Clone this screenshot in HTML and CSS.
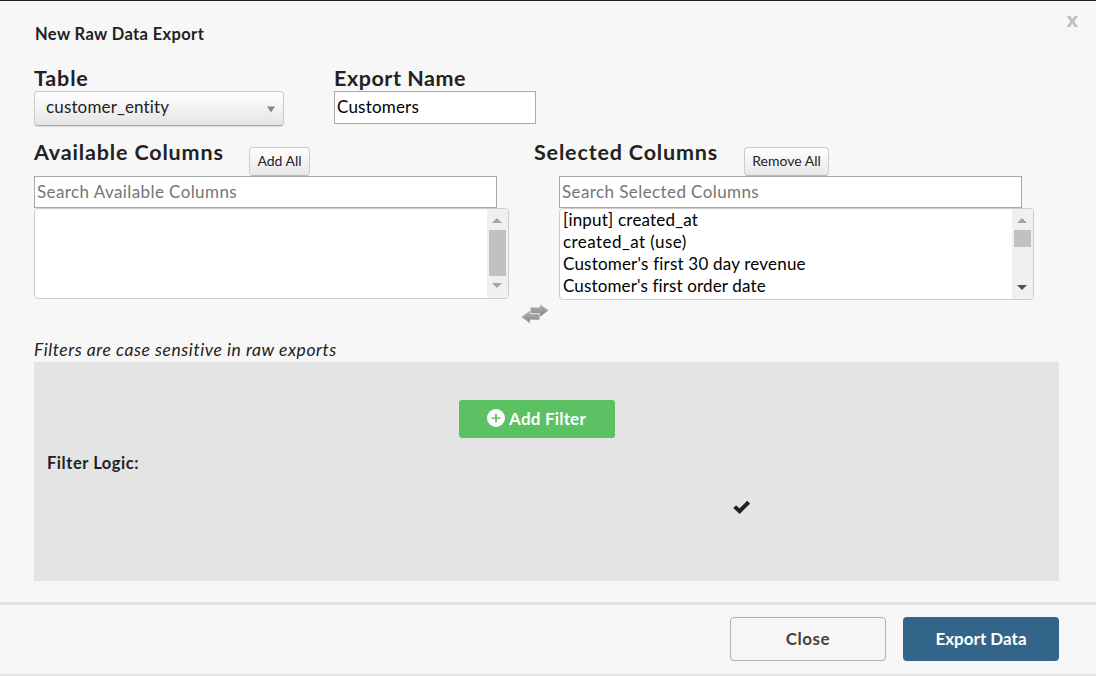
FILE: index.html
```html
<!DOCTYPE html>
<html lang="en">
<head>
<meta charset="utf-8">
<title>New Raw Data Export</title>
<link rel="stylesheet" href="styles.css">
</head>
<body>
<div class="modal">
  <header class="modal-header">
    <h1 class="title"><span>New Raw Data Export</span></h1>
    <span class="close-x">x</span>
  </header>
  <main class="modal-body">
    <div class="fields">
      <div class="field">
        <div class="heading"><span>Table</span></div>
        <div class="select"><span>customer_entity</span>
          <svg class="caret" width="8" height="7" viewBox="0 0 8 7"><path d="M0 0.5H8L4 6.5Z" fill="#888"/></svg>
        </div>
      </div>
      <div class="field">
        <div class="heading"><span class="export-label">Export Name</span></div>
        <div class="input name-input"><span>Customers</span></div>
      </div>
    </div>
    <div class="columns">
      <section class="available">
        <div class="column-head">
          <div class="heading"><span>Available Columns</span></div>
          <div class="small-btn add-all"><span>Add All</span></div>
        </div>
        <div class="input search"><span>Search Available Columns</span></div>
        <div class="list list-left">
          <div class="options"></div>
          <div class="scrollbar">
            <svg width="10" height="5" viewBox="0 0 10 5"><path d="M0 5L5 0L10 5Z" fill="#a3a3a3"/></svg>
            <div class="thumb thumb-tall"></div>
            <svg class="down" width="10" height="5" viewBox="0 0 10 5"><path d="M0 0L5 5L10 0Z" fill="#a3a3a3"/></svg>
          </div>
        </div>
      </section>
      <div class="swap">
        <svg width="28" height="20" viewBox="0 0 28 20">
          <defs>
            <linearGradient id="arrow" x1="0" y1="0" x2="0" y2="1"><stop offset="0" stop-color="#b4b4b4"/><stop offset="1" stop-color="#858585"/></linearGradient>
          </defs>
          <path d="M9.500 3.500H19V0.300L27.500 6.500L19 12.700V9.300H9.500Z" fill="url(#arrow)"/>
          <path d="M18.500 10H9V6.700L.5 12.900L9 19.200V15.800H18.500Z" fill="url(#arrow)" stroke="#d4d4d4" stroke-width=".4"/>
        </svg>
      </div>
      <section class="selected">
        <div class="column-head head-right">
          <div class="heading"><span>Selected Columns</span></div>
          <div class="small-btn remove-all"><span>Remove All</span></div>
        </div>
        <div class="input search"><span>Search Selected Columns</span></div>
        <div class="list list-right">
          <div class="options">
            <div class="option"><span>[input] created_at</span></div>
            <div class="option"><span class="wide">created_at (use)</span></div>
            <div class="option"><span>Customer's first 30 day revenue</span></div>
            <div class="option"><span class="tight">Customer's first order date</span></div>
          </div>
          <div class="scrollbar">
            <svg width="10" height="5" viewBox="0 0 10 5"><path d="M0 5L5 0L10 5Z" fill="#a3a3a3"/></svg>
            <div class="thumb thumb-short"></div>
            <svg class="down" width="10" height="5" viewBox="0 0 10 5"><path d="M0 0L5 5L10 0Z" fill="#505050"/></svg>
          </div>
        </div>
      </section>
    </div>
    <div class="note"><span>Filters are case sensitive in raw exports</span></div>
    <div class="filters">
      <div class="add-filter">
        <svg width="18" height="18" viewBox="0 0 18 18"><circle cx="9" cy="9" r="9" fill="#fff"/><path d="M9 4.500V13.500M4.500 9H13.500" stroke="#5bc163" stroke-width="1.700"/></svg>
        <span>Add Filter</span>
      </div>
      <div class="logic"><span>Filter Logic:</span></div>
      <svg class="check" width="17" height="14" viewBox="0 0 17 14"><path d="M1.700 6.600L6.600 11.200L15.600 2.200" fill="none" stroke="#222" stroke-width="4"/></svg>
    </div>
  </main>
  <footer class="modal-footer">
    <div class="btn btn-close"><span>Close</span></div>
    <div class="btn btn-export"><span>Export Data</span></div>
  </footer>
</div>
</body>
</html>
```
FILE: styles.css
```css
* { box-sizing: border-box; }
body { margin: 0; font-family: Lato, "Open Sans", sans-serif; font-size: 17px; font-variant-ligatures: none; color: #222; background: #f7f7f7; }
span { white-space: nowrap; }
svg { display: block; flex: none; }
.modal { height: 676px; display: flex; flex-direction: column; border-top: 1px solid #222; border-bottom: 2px solid #e4e4e4; background: #f7f7f7; }
.modal-header { height: 67px; padding: 23px 18px 0 35px; display: flex; justify-content: space-between; }
.title { margin: 0; font-size: 16.5px; line-height: 21px; font-weight: 700; letter-spacing: .37px; }
.close-x { font: 700 20px/20px "Open Sans", sans-serif; color: #c0c0c0; margin-top: -14px; }
.modal-body { height: 534px; padding: 0 37px 0 34px; }
.fields { display: flex; gap: 50px; height: 75px; }
.heading { font-size: 21.5px; line-height: 21px; height: 23px; font-weight: 700; letter-spacing: .84px; }
.export-label { letter-spacing: .55px; }
.select { width: 250px; height: 35px; padding: 0 8px 4px 11px; display: flex; align-items: center; justify-content: space-between; border: 1px solid #ccc; border-bottom-color: #aaa; border-radius: 4px; background: linear-gradient(#fff, #e5e5e5); box-shadow: 0 1px 1px rgba(0,0,0,.12); letter-spacing: .15px; }
.caret { margin-top: 5px; }
.input { display: flex; align-items: center; border: 1px solid #a9a9a9; background: #fff; padding: 0 2px; }
.name-input { width: 202px; height: 33px; padding-bottom: 2px; color: #000; letter-spacing: .2px; }
.columns { display: flex; height: 195px; }
.available { width: 475px; }
.swap { width: 50px; padding: 161px 0 0 12px; }
.selected { width: 475px; }
.column-head { display: flex; height: 33px; justify-content: space-between; padding-right: 199px; }
.head-right { margin-left: -25px; padding-right: 205px; }
.column-head .heading { line-height: 18px; }
.small-btn { height: 29px; margin-top: 4px; padding-bottom: 2px; display: flex; align-items: center; justify-content: center; font-size: 14px; border: 1px solid #ccc; border-bottom-color: #b8b8b8; border-radius: 4px; background: linear-gradient(#fff, #e8e8e8); }
.add-all { width: 61px; }
.remove-all { width: 85px; }
.search { width: 463px; height: 32px; padding-bottom: 2px; color: #757575; letter-spacing: .41px; }
.list { display: flex; border: 1px solid #ccc; border-radius: 4px; background: #fff; overflow: hidden; color: #000; }
.list-left { height: 91px; }
.list-right { height: 92px; }
.options { flex: 1; padding: 0 3px; letter-spacing: .2px; }
.wide { letter-spacing: .45px; }
.tight { letter-spacing: .14px; }
.option { height: 22px; line-height: 22px; }
.scrollbar { width: 21px; padding: 9px 0 9px; background: #f0f0f0; display: flex; flex-direction: column; align-items: center; }
.scrollbar svg { margin-right: 1px; }
.thumb { width: 17px; margin-top: 7px; background: #c1c1c1; }
.list-left .down { margin-bottom: 1px; }
.thumb-tall { height: 46px; }
.thumb-short { height: 17px; }
.down { margin-top: auto; }
.note { height: 24px; line-height: 23px; font-size: 17.5px; font-style: italic; letter-spacing: .54px; }
.filters { height: 219px; background: #e4e4e4; padding: 38px 13px 0; }
.add-filter { width: 156px; height: 38px; margin-left: 412px; padding: 0 1px 2px 0; display: flex; align-items: center; justify-content: center; gap: 4px; border-radius: 3px; background: #5bc163; color: #fff; font-weight: 700; letter-spacing: .2px; }
.logic { margin-top: 14px; height: 22px; line-height: 22px; font-weight: 700; font-size: 16.5px; letter-spacing: .55px; }
.check { margin: 26px 0 0 686px; }
.modal-footer { height: 72px; border-top: 3px solid #e4e4e4; padding: 12px 37px 0; display: flex; justify-content: flex-end; gap: 17px; }
.btn { width: 156px; height: 44px; display: flex; align-items: center; justify-content: center; border-radius: 4px; font-weight: 700; }
.btn-close { border: 1px solid #b0b0b0; color: #444; padding-bottom: 2px; letter-spacing: .5px; }
.btn-export { background: #33658a; color: #fff; padding-bottom: 1px; }
```
